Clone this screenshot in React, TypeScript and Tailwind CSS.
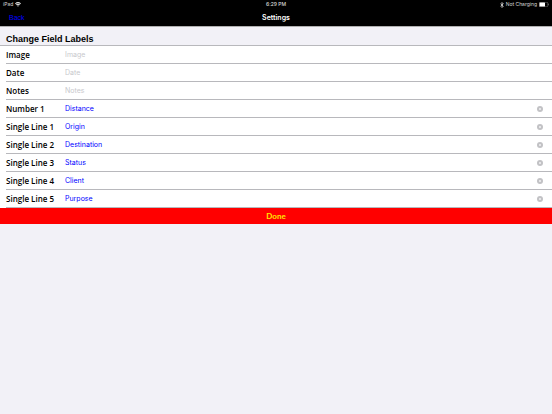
import React, { useState } from 'react';

interface Field {
  id: string;
  label: string;
  placeholder: string;
  value: string;
}

const FIELDS: Field[] = [
  { id: 'image', label: 'Image', placeholder: 'Image', value: '' },
  { id: 'date', label: 'Date', placeholder: 'Date', value: '' },
  { id: 'notes', label: 'Notes', placeholder: 'Notes', value: '' },
  { id: 'number1', label: 'Number 1', placeholder: 'Number 1', value: 'Distance' },
  { id: 'line1', label: 'Single Line 1', placeholder: 'Single Line 1', value: 'Origin' },
  { id: 'line2', label: 'Single Line 2', placeholder: 'Single Line 2', value: 'Destination' },
  { id: 'line3', label: 'Single Line 3', placeholder: 'Single Line 3', value: 'Status' },
  { id: 'line4', label: 'Single Line 4', placeholder: 'Single Line 4', value: 'Client' },
  { id: 'line5', label: 'Single Line 5', placeholder: 'Single Line 5', value: 'Purpose' },
];

const WifiIcon: React.FC = () => (
  <svg viewBox="0 0 12 9" className="w-[6px] h-[5px]" fill="none" stroke="#e4e4e4" strokeWidth="2.1">
    <path d="M0.8 3.2a7.4 7.4 0 0 1 10.4 0" />
    <path d="M2.8 5.4a4.6 4.6 0 0 1 6.4 0" />
    <path d="M4.3 6.9 6 8.8l1.7-1.9a2.4 2.4 0 0 0-3.4 0z" fill="#e4e4e4" stroke="none" />
  </svg>
);

const BluetoothIcon: React.FC = () => (
  <svg viewBox="0 0 8 12" className="w-[4px] h-[6px]" fill="none" stroke="#d8d8d8" strokeWidth="1.6">
    <path d="m1 3.4 5.6 5L4 11V1l2.6 2.6-5.6 5" />
  </svg>
);

const BatteryIcon: React.FC = () => (
  <svg viewBox="0 0 20 10" className="w-[10px] h-[5px]">
    <rect x="0.5" y="0.5" width="17" height="9" rx="2" fill="none" stroke="#8a8a8a" />
    <rect x="1" y="1" width="11" height="8" rx="1" fill="#ffffff" />
    <path d="M18.5 3.2v3.6c.8-.3 1.3-1 1.3-1.8s-.5-1.5-1.3-1.8z" fill="#8a8a8a" />
  </svg>
);

const ClearIcon: React.FC = () => (
  <svg viewBox="0 0 12 12" className="w-[6px] h-[6px]">
    <circle cx="6" cy="6" r="6" fill="#c2c2c5" />
    <path d="m4 4 4 4M8 4 4 8" stroke="#ffffff" strokeWidth="1.2" />
  </svg>
);

const StatusBar: React.FC = () => (
  <div className="grid grid-cols-3 items-center h-[9px] px-[3px] text-[5px] leading-[9px] text-[#d8d8d8]">
    <div className="flex items-center gap-[2px]">
      <span>iPad</span>
      <WifiIcon />
    </div>
    <span className="text-center font-medium">6:29 PM</span>
    <div className="flex items-center justify-end gap-[2px]">
      <BluetoothIcon />
      <span>Not Charging</span>
      <BatteryIcon />
    </div>
  </div>
);

const FieldRow: React.FC<{ field: Field }> = ({ field }) => {
  const [value, setValue] = useState(field.value);

  return (
    <div className="pl-[6px]">
      <div className="flex items-center h-[18px] pr-[9px] border-b border-[#b8b8bc]">
        <label htmlFor={field.id} className="w-[59px] shrink-0 whitespace-nowrap font-['Open_Sans',sans-serif] text-[8px] leading-[12px] font-semibold text-black">
          {field.label}
        </label>
        <input
          id={field.id}
          type="text"
          value={value}
          placeholder={field.placeholder}
          onChange={(e) => setValue(e.target.value)}
          className="flex-1 min-w-0 bg-transparent text-[7px] leading-[10px] text-[#0000ff] placeholder:text-[#c8c8cc] outline-none"
        />
        {value && (
          <button type="button" aria-label={`Clear ${field.label}`} onClick={() => setValue('')}>
            <ClearIcon />
          </button>
        )}
      </div>
    </div>
  );
};

const App: React.FC = () => {
  return (
    <div className="min-h-screen bg-[#f2f1f7] font-['Inter',sans-serif]">
      <header className="bg-black border-b border-[#b0b0b0]">
        <StatusBar />
        <nav className="grid grid-cols-3 items-center h-[17px] px-[9px]">
          <a href="#back" className="justify-self-start font-['Liberation_Sans',sans-serif] text-[7px] leading-[17px] text-[#0000ff]">
            Back
          </a>
          <h1 className="text-center text-[7px] leading-[17px] font-semibold text-white">Settings</h1>
        </nav>
      </header>

      <main>
        <h2 className="px-[6px] pt-[6px] border-b border-[#b8b8bc] font-['Liberation_Sans',sans-serif] text-[9px] leading-[12px] font-bold text-black">
          Change Field Labels
        </h2>
        <form className="bg-white" onSubmit={(e) => e.preventDefault()}>
          {FIELDS.map((field) => (
            <FieldRow key={field.id} field={field} />
          ))}
          <button
            type="submit"
            className="block w-full h-[16px] bg-[#ff0000] font-['Lato',sans-serif] text-[8px] leading-[16px] font-bold text-[#ffe600]"
          >
            Done
          </button>
        </form>
      </main>
    </div>
  );
};

export default App;
